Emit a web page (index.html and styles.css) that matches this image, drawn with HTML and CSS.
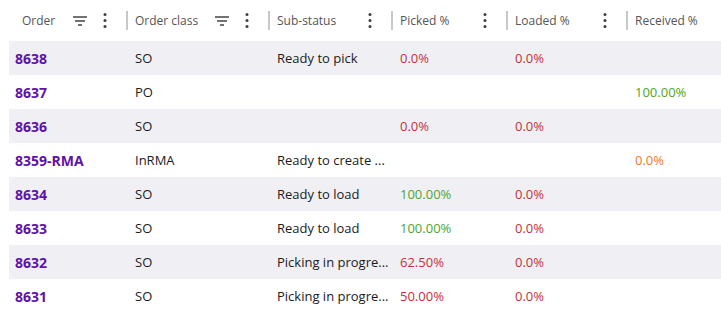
FILE: index.html
```html
<!DOCTYPE html>
<html>
<head>
<meta charset="utf-8">
<link rel="stylesheet" href="styles.css">
</head>
<body>
<div class="grid">
  <div class="head">
    <div class="hc c1"><span class="lbl first">Order</span><span class="icons"><svg class="filter" width="14" height="10" viewBox="0 0 14 10"><path d="M0 1h14M2 5h10M5 9h4" stroke="#444" stroke-width="1.4"/></svg><svg class="kebab" width="4" height="15" viewBox="0 0 4 15"><circle cx="2" cy="1.6" r="1.5"/><circle cx="2" cy="7.5" r="1.5"/><circle cx="2" cy="13.4" r="1.5"/></svg></span></div>
    <div class="hc c2 sep"><span class="lbl">Order class</span><span class="icons"><svg class="filter" width="14" height="10" viewBox="0 0 14 10"><path d="M0 1h14M2 5h10M5 9h4" stroke="#444" stroke-width="1.4"/></svg><svg class="kebab" width="4" height="15" viewBox="0 0 4 15"><circle cx="2" cy="1.6" r="1.5"/><circle cx="2" cy="7.5" r="1.5"/><circle cx="2" cy="13.4" r="1.5"/></svg></span></div>
    <div class="hc c3 sep"><span class="lbl">Sub-status</span><span class="icons"><svg class="kebab" width="4" height="15" viewBox="0 0 4 15"><circle cx="2" cy="1.6" r="1.5"/><circle cx="2" cy="7.5" r="1.5"/><circle cx="2" cy="13.4" r="1.5"/></svg></span></div>
    <div class="hc c4 sep"><span class="lbl">Picked %</span><span class="icons"><svg class="kebab" width="4" height="15" viewBox="0 0 4 15"><circle cx="2" cy="1.6" r="1.5"/><circle cx="2" cy="7.5" r="1.5"/><circle cx="2" cy="13.4" r="1.5"/></svg></span></div>
    <div class="hc c5 sep"><span class="lbl">Loaded %</span><span class="icons"><svg class="kebab" width="4" height="15" viewBox="0 0 4 15"><circle cx="2" cy="1.6" r="1.5"/><circle cx="2" cy="7.5" r="1.5"/><circle cx="2" cy="13.4" r="1.5"/></svg></span></div>
    <div class="hc c6 sep"><span class="lbl">Received %</span></div>
  </div>

  <div class="row alt">
    <div class="cell id">8638</div><div class="cell">SO</div><div class="cell">Ready to pick</div><div class="cell red">0.0%</div><div class="cell red">0.0%</div><div class="cell"></div>
  </div>
  <div class="row">
    <div class="cell id">8637</div><div class="cell">PO</div><div class="cell"></div><div class="cell"></div><div class="cell"></div><div class="cell green">100.00%</div>
  </div>
  <div class="row alt">
    <div class="cell id">8636</div><div class="cell">SO</div><div class="cell"></div><div class="cell red">0.0%</div><div class="cell red">0.0%</div><div class="cell"></div>
  </div>
  <div class="row">
    <div class="cell id">8359-RMA</div><div class="cell">InRMA</div><div class="cell">Ready to create ...</div><div class="cell"></div><div class="cell"></div><div class="cell orange">0.0%</div>
  </div>
  <div class="row alt">
    <div class="cell id">8634</div><div class="cell">SO</div><div class="cell">Ready to load</div><div class="cell green">100.00%</div><div class="cell red">0.0%</div><div class="cell"></div>
  </div>
  <div class="row">
    <div class="cell id">8633</div><div class="cell">SO</div><div class="cell">Ready to load</div><div class="cell green">100.00%</div><div class="cell red">0.0%</div><div class="cell"></div>
  </div>
  <div class="row alt">
    <div class="cell id">8632</div><div class="cell">SO</div><div class="cell">Picking in progre...</div><div class="cell red">62.50%</div><div class="cell red">0.0%</div><div class="cell"></div>
  </div>
  <div class="row">
    <div class="cell id">8631</div><div class="cell">SO</div><div class="cell">Picking in progre...</div><div class="cell red">50.00%</div><div class="cell red">0.0%</div><div class="cell"></div>
  </div>
</div>
</body>
</html>
```
FILE: styles.css
```css
html, body {
  margin: 0;
  padding: 0;
  background: #ffffff;
  overflow: hidden;
}
body {
  font-family: "Open Sans", "Noto Sans", sans-serif;
  color: #1b1b1b;
}
.grid {
  margin-left: 9px;
  width: 730px;
}
.head, .row {
  display: grid;
  grid-template-columns: 117px 142px 123px 115px 120px 112px;
}
.head {
  height: 41px;
}
.hc {
  position: relative;
  display: flex;
  align-items: center;
  padding-left: 9px;
  font-size: 12px;
  color: #555555;
}
.hc .lbl.first {
  padding-left: 4px;
}
.sep::before {
  content: "";
  position: absolute;
  left: 0;
  top: 11px;
  width: 2px;
  height: 19px;
  background: #c8c8c8;
}
.icons {
  margin-left: auto;
  display: flex;
  align-items: center;
  gap: 16px;
  padding-right: 19px;
}
.kebab {
  fill: #3a3f4a;
}
.row {
  height: 34px;
}
.row.alt {
  background: #f0f0f4;
}
.cell {
  display: flex;
  align-items: center;
  padding-left: 9px;
  font-size: 13px;
  white-space: nowrap;
}
.cell.id {
  padding-left: 6px;
  font-size: 14px;
  font-weight: 700;
  color: #6111a8;
}
.red { color: #c4313b; }
.green { color: #4ea529; }
.orange { color: #ef7a2a; }
```
